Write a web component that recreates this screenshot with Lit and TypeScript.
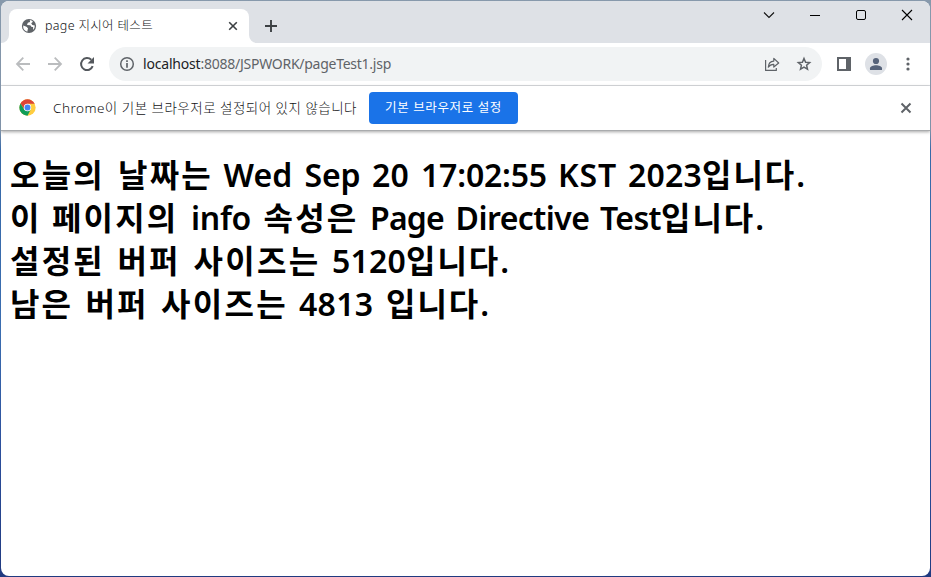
import { LitElement, html, css } from "lit";
import { customElement, property, query } from "lit/decorators.js";

/** A run of text tracked so that it fills a given advance width. */
@customElement("tracked-run")
class TrackedRun extends LitElement {
  @property({ type: Number }) advance = 0;
  @property() text = "";
  @query("span") private run!: HTMLSpanElement;

  static styles = css`
    :host { display: inline-block; white-space: pre; }
    span { display: inline-block; }
  `;

  updated() {
    const el = this.run;
    el.style.letterSpacing = "0px";
    const natural = el.getBoundingClientRect().width;
    const gap = (this.advance - natural) / Array.from(this.text).length;
    el.style.letterSpacing = `${gap}px`;
  }

  render() {
    return html`<span>${this.text}</span>`;
  }
}

type Run = [text: string, advance: number];

const LINES: Run[][] = [
  [["오늘의", 95], [" ", 13], ["날짜는", 95], [" ", 10.5], ["Wed", 69], [" ", 12], ["Sep", 56], [" ", 11.5], ["20", 37], [" ", 12], ["17:02:55", 126], [" ", 11], ["KST", 59], [" ", 11], ["2023", 74], ["입니다.", 105]],
  [["이", 29.5], [" ", 12.5], ["페이지의", 126.5], [" ", 12.5], ["info", 60], [" ", 12.5], ["속성은", 95], [" ", 11.5], ["Page", 74], [" ", 11.5], ["Directive", 134], [" ", 10.5], ["Test", 61], ["입니다.", 105]],
  [["설정된", 95], [" ", 12.5], ["버퍼", 63], [" ", 13], ["사이즈는", 127], [" ", 11.5], ["5120", 74], ["입니다.", 105]],
  [["남은", 63], [" ", 12.5], ["버퍼", 63], [" ", 12.5], ["사이즈는", 127], [" ", 11], ["4813", 74.5], [" ", 12.5], ["입니다.", 105]],
];

@customElement("app-root")
class AppRoot extends LitElement {
  static styles = css`
    :host {
      display: block;
      box-sizing: border-box;
      width: 931px;
      height: 577px;
      padding: 1px;
      background: linear-gradient(180deg, #8799ac 0, #7f92a8 130px, #3769a8 150px, #3a6db0 330px, #2c4f9c 450px, #203a80 577px);
      font-family: "Noto Sans", "Noto Sans CJK KR", sans-serif;
      color: #3c4043;
    }
    * { box-sizing: border-box; }
    svg { display: block; flex: none; }
    .window {
      height: 575px;
      display: flex;
      flex-direction: column;
      background: #fff;
      border-radius: 8px;
      overflow: hidden;
    }
    .strip {
      height: 42px;
      flex: none;
      display: flex;
      background: #dee1e6;
    }
    .foot { align-self: flex-end; }
    .tab {
      width: 240px;
      height: 34px;
      margin-top: 8px;
      padding: 0 8px 0 12px;
      display: flex;
      align-items: center;
      background: #fff;
      border-radius: 8px 8px 0 0;
    }
    .title { margin-left: 8px; font-size: 12.5px; line-height: 16px; flex: 1; }
    .light { font-weight: 300; color: #111214; }
    .plus { margin: 17px 0 0 7px; }
    .controls { margin-left: auto; display: flex; height: 28px; }
    .control, .slot { display: flex; align-items: center; justify-content: center; }
    .control { width: 46px; }
    .bar {
      height: 43px;
      flex: none;
      display: flex;
      align-items: center;
      padding: 0 6px;
      border-bottom: 1px solid #dadce0;
    }
    .slot { width: 32px; height: 32px; }
    .omnibox {
      width: 713px;
      height: 34px;
      margin: 0 6px;
      padding: 0 2px 0 10px;
      display: flex;
      align-items: center;
      border-radius: 17px;
      background: #f1f3f4;
    }
    .url { flex: 1; margin-left: 8px; font-size: 14px; line-height: 20px; white-space: nowrap; color: #5f6368; }
    .host { color: #202124; }
    .avatar { width: 22px; height: 22px; border-radius: 50%; background: #dee1e6; overflow: hidden; }
    .info {
      height: 45px;
      flex: none;
      display: flex;
      align-items: center;
      padding: 0 16px 1px 17.5px;
      border-bottom: 1px solid #a9abad;
      box-shadow: 0 1px 3px rgba(0, 0, 0, 0.35);
    }
    .notice { margin-left: 17.5px; width: 316px; font-size: 13.5px; line-height: 20px; white-space: nowrap; }
    .action {
      width: 149px;
      height: 32px;
      border: 0;
      border-radius: 4px;
      padding: 0;
      background: #1a73e8;
      color: #fff;
      font: 400 12.5px/20px "Noto Sans", "Noto Sans CJK KR", sans-serif;
      white-space: nowrap;
    }
    .dismiss { margin-left: auto; margin-right: 2px; }
    .page {
      margin: 0;
      padding: 22px 9px;
      font-size: 32px;
      font-weight: 600;
      color: #000;
    }
    .line { height: 43px; line-height: 43px; display: flex; }
  `;

  render() {
    return html`
      <div class="window">
        <div class="strip">
          <svg class="foot" width="8" height="8"><path d="M0 8A8 8 0 0 0 8 0V8Z" fill="#fff"/></svg>
          <div class="tab">
            <svg width="16" height="16" viewBox="0 0 16 16">
              <circle cx="8" cy="8" r="7.1" fill="#5f6368"/>
              <path d="M2.2 7.5 5.5 8.8 7 10.3 6.3 13.8A6 6 0 0 1 2.2 7.5ZM8.8 2.1 9 4 6.8 4.8 6 7 9.3 7.2 10.6 9 12.1 9.1 12 12.1A6 6 0 0 0 13.8 7.4L11.3 7 10.2 5.2 12 3.7A6 6 0 0 0 8.8 2.1Z" fill="#fff"/>
            </svg>
            <div class="title light"><tracked-run text="page 지시어 테스트" advance="108"></tracked-run></div>
            <svg width="16" height="16" stroke="#3c4043" stroke-width="1.6"><path d="M4.2 4.2 11.8 11.8M11.8 4.2 4.2 11.8"/></svg>
          </div>
          <svg class="foot" width="8" height="8"><path d="M0 0A8 8 0 0 0 8 8H0Z" fill="#fff"/></svg>
          <svg class="plus" width="16" height="16" stroke="#3c4043" stroke-width="1.9"><path d="M7 2V14M1 8H13"/></svg>
          <div class="controls">
            <div class="control"><svg width="12" height="12" fill="none" stroke="#111" stroke-width="1.1"><path d="M1 3.5 6 8.5 11 3.5"/></svg></div>
            <div class="control"><svg width="12" height="12" stroke="#000"><path d="M1 6.5H11"/></svg></div>
            <div class="control"><svg width="12" height="12" fill="none" stroke="#000"><rect x="1.5" y="1.5" width="9" height="9" rx="1.5"/></svg></div>
            <div class="control"><svg width="12" height="12" stroke="#000" stroke-width="1.1"><path d="M1 1 11 11M11 1 1 11"/></svg></div>
          </div>
        </div>

        <div class="bar">
          <div class="slot"><svg width="16" height="16" fill="none" stroke="#babcbe" stroke-width="1.8"><path d="M15 8H2.2M8.3 1.7 2 8 8.3 14.3"/></svg></div>
          <div class="slot"><svg width="16" height="16" fill="none" stroke="#babcbe" stroke-width="1.8"><path d="M1 8H13.8M7.7 1.7 14 8 7.7 14.3"/></svg></div>
          <div class="slot"><svg width="16" height="16" fill="none"><path d="M13.7 10.2A6 6 0 1 1 12.3 3.8" stroke="#54585d" stroke-width="2"/><path d="M15 1V7.5H8.5Z" fill="#54585d"/></svg></div>
          <div class="omnibox">
            <svg width="16" height="16" fill="none" stroke="#5f6368" stroke-width="1.5"><circle cx="8" cy="8" r="6.3"/><path d="M8 7V11.7M8 4.3V5.9" stroke-width="1.7"/></svg>
            <div class="url"><span class="host"><tracked-run text="localhost" advance="57.5"></tracked-run></span><tracked-run text=":8088/JSPWORK/pageTest1.jsp" advance="190.5"></tracked-run></div>
            <div class="slot"><svg width="16" height="16" fill="none" stroke="#5f6368" stroke-width="1.2"><path d="M1.6 4V14.4H12.3V12M4.3 11.2C4.5 7.3 6.5 5.3 9.8 5.1V2.4L14.7 7 9.8 11V8.4C7.5 8.3 5.8 9 4.3 11.2Z" stroke-linejoin="round"/></svg></div>
            <div class="slot"><svg width="16" height="16" fill="none" stroke="#5f6368" stroke-width="1.5"><path d="M8 2.5 9.6 6.2 13.7 6.6 10.6 9.3 11.5 13.2 8 11.1 4.5 13.2 5.4 9.3 2.3 6.6 6.4 6.2Z"/></svg></div>
          </div>
          <div class="slot"><svg width="14" height="14"><path fill-rule="evenodd" d="M0 0H14V14H0ZM2 2V12H9V2Z" fill="#5f6368"/></svg></div>
          <div class="slot"><div class="avatar"><svg width="22" height="22" fill="#56637a"><circle cx="11" cy="8" r="3.1"/><path d="M5 17V15.2C5 13.2 8.5 12.2 11 12.2S17 13.2 17 15.2V17Z"/></svg></div></div>
          <div class="slot"><svg width="4" height="16" fill="#5f6368"><circle cx="2" cy="3" r="1.6"/><circle cx="2" cy="8" r="1.6"/><circle cx="2" cy="13" r="1.6"/></svg></div>
        </div>

        <div class="info">
          <svg width="17" height="17" viewBox="0 0 48 48">
            <circle cx="24" cy="24" r="23" fill="#ffcd40"/>
            <path d="M4.1 12.5A23 23 0 0 1 43.9 12.5L44 13.5H24L14.9 29.2Z" fill="#db4437"/>
            <path d="M4.1 12.5A23 23 0 0 0 24 47L33.1 29.3 24 34.5 14.9 29.3Z" fill="#0f9d58"/>
            <circle cx="24" cy="24" r="10.5" fill="#fff"/><circle cx="24" cy="24" r="8.4" fill="#4285f4"/>
          </svg>
          <div class="notice light"><tracked-run text="Chrome이 기본 브라우저로 설정되어 있지 않습니다" advance="304"></tracked-run></div>
          <button class="action"><tracked-run text="기본 브라우저로 설정" advance="117"></tracked-run></button>
          <svg class="dismiss" width="12" height="12" stroke="#5f6368" stroke-width="2"><path d="M1.5 1.5 10.5 10.5M10.5 1.5 1.5 10.5"/></svg>
        </div>

        <h1 class="page">
          ${LINES.map((runs) => html`<div class="line">${runs.map(([text, advance]) => html`<tracked-run text=${text} advance=${advance}></tracked-run>`)}</div>`)}
        </h1>
      </div>
    `;
  }
}
